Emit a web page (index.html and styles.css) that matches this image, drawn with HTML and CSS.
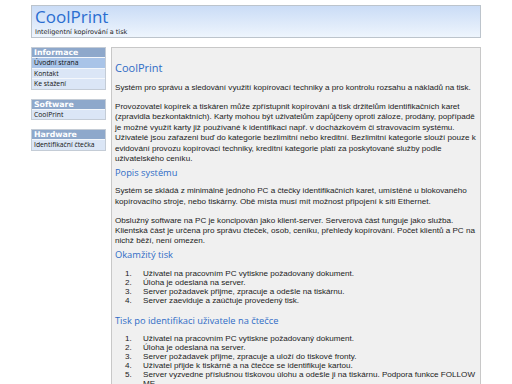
FILE: index.html
```html
<!DOCTYPE html>
<html lang="cs">
<head>
  <meta charset="UTF-8" />
  <title>CoolPrint</title>
  <link rel="stylesheet" href="styles.css">
</head>
<body>
  <div class="page">
    <!-- Hlavička -->
    <div class="header">
      <div class="logo">CoolPrint</div>
      <div class="motto">Inteligentní kopírování a tisk</div>
    </div>

    <div class="main">
      <!-- Levé menu -->
      <div class="sidebar">
        <div class="menu">
          <div class="menu-title">Informace</div>
          <a class="menu-item active" href="#">Úvodní strana</a>
          <a class="menu-item" href="#">Kontakt</a>
          <a class="menu-item" href="#">Ke stažení</a>
        </div>
        <div class="menu">
          <div class="menu-title">Software</div>
          <a class="menu-item" href="#">CoolPrint</a>
        </div>
        <div class="menu">
          <div class="menu-title">Hardware</div>
          <a class="menu-item" href="#">Identifikační čtečka</a>
        </div>
      </div>

      <!-- Obsah -->
      <div class="content">
        <h1>CoolPrint</h1>
        <p>Systém pro správu a sledování využití kopírovací techniky a pro kontrolu rozsahu a nákladů na tisk.</p>
        <p>Provozovatel kopírek a tiskáren může zpřístupnit kopírování a tisk držitelům identifikačních karet (zpravidla bezkontaktních). Karty mohou být uživatelům zapůjčeny oproti záloze, prodány, popřípadě je možné využít karty již používané k identifikaci např. v docházkovém či stravovacím systému. Uživatelé jsou zařazeni buď do kategorie bezlimitní nebo kreditní. Bezlimitní kategorie slouží pouze k evidování provozu kopírovací techniky, kreditní kategorie platí za poskytované služby podle uživatelského ceníku.</p>

        <h2>Popis systému</h2>
        <p>Systém se skládá z minimálně jednoho PC a čtečky identifikačních karet, umístěné u blokovaného kopírovacího stroje, nebo tiskárny. Obě místa musí mít možnost připojení k síti Ethernet.</p>
        <p>Obslužný software na PC je koncipován jako klient-server. Serverová část funguje jako služba. Klientská část je určena pro správu čteček, osob, ceníku, přehledy kopírování. Počet klientů a PC na nichž běží, není omezen.</p>

        <h2>Okamžitý tisk</h2>
        <ol>
          <li>Uživatel na pracovním PC vytiskne požadovaný dokument.</li>
          <li>Úloha je odeslaná na server.</li>
          <li>Server požadavek přijme, zpracuje a odešle na tiskárnu.</li>
          <li>Server zaeviduje a zaúčtuje provedený tisk.</li>
        </ol>

        <h2>Tisk po identifikaci uživatele na čtečce</h2>
        <ol>
          <li>Uživatel na pracovním PC vytiskne požadovaný dokument.</li>
          <li>Úloha je odeslaná na server.</li>
          <li>Server požadavek přijme, zpracuje a uloží do tiskové fronty.</li>
          <li>Uživatel přijde k tiskárně a na čtečce se identifikuje kartou.</li>
          <li>Server vyzvedne příslušnou tiskovou úlohu a odešle ji na tiskárnu. Podpora funkce FOLLOW ME.</li>
        </ol>
      </div>
    </div>
  </div>
</body>
</html>
```

FILE: styles.css
```css
body {
  margin: 0;
  padding: 5px 0 0;
  background: #fff;
  font-family: "Liberation Sans", Arial, sans-serif;
  font-size: 8.1px;
  color: #222;
}
.page {
  width: 450px;
  margin: 0 auto;
}
/* Hlavička */
.header {
  height: 31px;
  border: 1px solid #bcc4cc;
  background: linear-gradient(#cadcf6, #eef5fd);
  padding: 0 3px;
}
.logo {
  font-family: "Open Sans", sans-serif;
  font-size: 17px;
  line-height: 22px;
  color: #2a6dd0;
}
.motto {
  font-family: "DejaVu Sans", Verdana, sans-serif;
  font-size: 6.5px;
  line-height: 8px;
  color: #222;
}
.main {
  display: flex;
  gap: 5px;
  margin-top: 9px;
}
/* Levé menu */
.sidebar {
  width: 75px;
  flex-shrink: 0;
  font-family: "Open Sans", sans-serif;
  font-size: 6.8px;
}
.menu {
  border: 1px solid #c4ccd6;
  margin-bottom: 9px;
}
.menu-title {
  background: #8ea8cb;
  color: #fff;
  font-weight: bold;
  font-family: "DejaVu Sans", Verdana, sans-serif;
  font-size: 7.8px;
  line-height: 9px;
  padding: 0 2px;
}
.menu-item {
  display: block;
  background: #dbe6f6;
  color: #111;
  text-decoration: none;
  line-height: 9.5px;
  padding: 0 2px;
  border-top: 1px solid #f4f7fb;
}
.menu-item.active {
  background: #a9c4e8;
}
/* Obsah */
.content {
  flex: 1;
  min-height: 340px;
  border: 1px solid #c8c8c8;
  background: #f0f0f0;
  padding: 0 2px 0 3px;
}
.content h1 {
  font-family: "Open Sans", sans-serif;
  font-weight: normal;
  font-size: 11px;
  line-height: 14px;
  color: #2f6cc6;
  margin: 13px 0 8px;
}
.content h2 {
  font-family: "Open Sans", sans-serif;
  font-weight: normal;
  font-size: 9.3px;
  line-height: 11px;
  color: #2f6cc6;
  margin: 2.5px 0 8.3px;
}
.content p {
  line-height: 10.4px;
  margin: 0;
}
.content p + p {
  margin-top: 8.6px;
}
.content ol {
  margin: 0 0 10px;
  padding-left: 19px;
  line-height: 9px;
}
.content li {
  padding-left: 9px;
}
```
